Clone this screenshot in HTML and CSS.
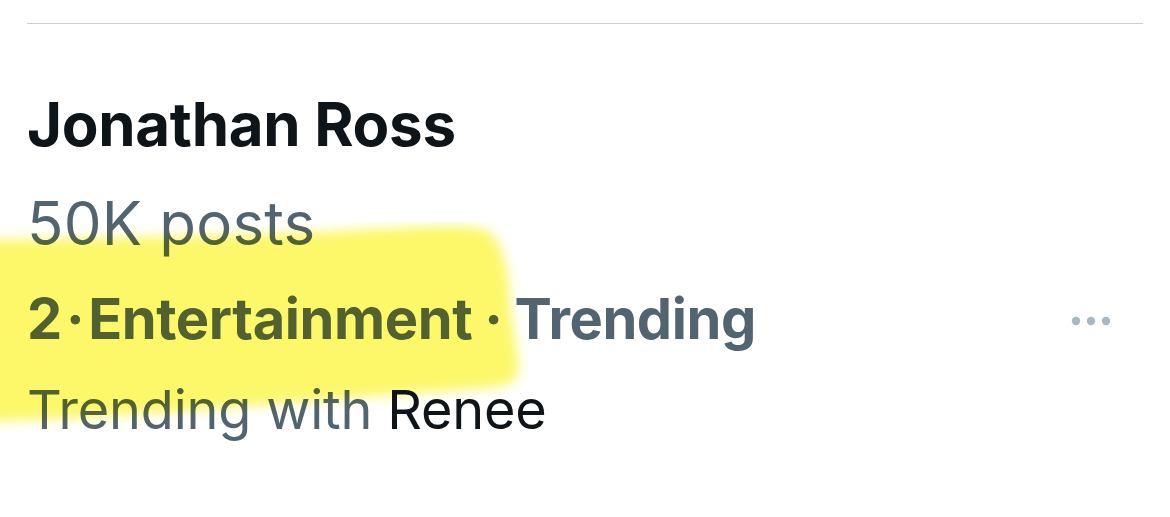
FILE: index.html
```html
<!DOCTYPE html>
<html lang="en">
<head>
<meta charset="utf-8">
<link rel="stylesheet" href="styles.css">
<title>Trend</title>
</head>
<body>
<div class="page">
  <div class="divider"></div>
  <div class="trend">
    <div class="name">Jonathan Ross</div>
    <div class="posts">50K posts</div>
    <div class="meta-row">
      <div class="meta">2<span class="sep1">·</span>Entertainment<span class="sep2">·</span>Trending</div>
      <svg class="more" width="44" height="10" viewBox="0 0 44 10" aria-hidden="true">
        <circle cx="5" cy="5" r="4.2" fill="#aab8c2"/>
        <circle cx="20" cy="5" r="4.2" fill="#aab8c2"/>
        <circle cx="35" cy="5" r="4.2" fill="#aab8c2"/>
      </svg>
    </div>
    <div class="with">Trending with <span class="who">Renee</span></div>
  </div>
  <svg class="highlight" width="560" height="240" viewBox="0 0 560 240" aria-hidden="true">
    <defs>
      <filter id="soft" x="-20%" y="-20%" width="140%" height="140%">
        <feGaussianBlur stdDeviation="6"/>
      </filter>
    </defs>
    <path filter="url(#soft)" fill="#fcf86a" d="M-20 18 C 100 16, 220 14, 320 10 C 400 6, 450 2, 478 6 C 502 10, 508 40, 510 80 C 512 110, 520 130, 518 150 C 516 162, 505 164, 490 166 C 400 172, 300 180, 200 188 C 120 194, 50 198, -20 200 Z"/>
  </svg>
</div>
</body>
</html>
```
FILE: styles.css
```css
html, body {
  margin: 0;
  padding: 0;
  background: #ffffff;
}
.page {
  position: relative;
  width: 1170px;
  height: 517px;
  overflow: hidden;
  font-family: Inter, "Noto Sans", "Liberation Sans", sans-serif;
}
.divider {
  margin: 23px 27px 0 27px;
  height: 1px;
  background: #c9cdd0;
}
.trend {
  display: flex;
  flex-direction: column;
  padding: 70px 55px 0 27px;
}
.name {
  font-size: 60px;
  line-height: 1;
  font-weight: 700;
  color: #0f1419;
  letter-spacing: -0.3px;
}
.posts {
  margin-top: 39px;
  font-size: 60px;
  line-height: 1;
  font-weight: 400;
  color: #536471;
  letter-spacing: 0.2px;
}
.meta-row {
  margin-top: 38px;
  display: flex;
  align-items: center;
  justify-content: space-between;
}
.meta {
  font-size: 56px;
  line-height: 1;
  font-weight: 700;
  color: #536471;
  letter-spacing: -0.4px;
}
.sep1 { margin: 0 4px; }
.sep2 { margin: 0 12px; }
.more {
  flex: none;
  margin-top: 4px;
}
.with {
  margin-top: 36px;
  font-size: 54px;
  line-height: 1;
  font-weight: 400;
  color: #536471;
  letter-spacing: -0.2px;
}
.who { color: #0f1419; }
.highlight {
  position: absolute;
  left: 0;
  top: 222px;
  mix-blend-mode: multiply;
  pointer-events: none;
}
```
